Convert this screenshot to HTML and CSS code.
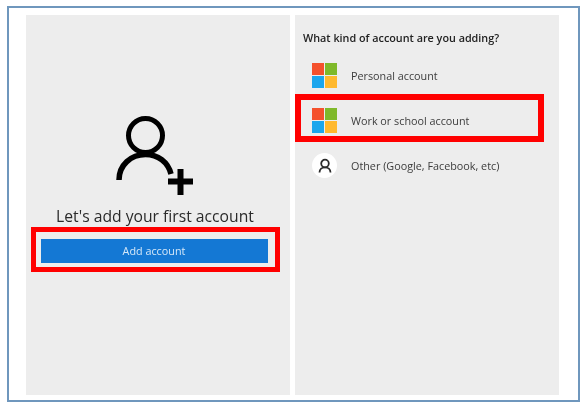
FILE: index.html
```html
<!DOCTYPE html>
<html>
<head>
    <meta charset="UTF-8">
    <title>Add account</title>
    <link rel="stylesheet" href="styles.css">
</head>
<body>
    <div class="frame">
        <!-- Left panel -->
        <div class="panel panel-start">
            <svg class="add-user" viewBox="110 112 90 86" width="90" height="86" fill="none" stroke="#000">
                <circle cx="145.5" cy="135.5" r="17" stroke-width="5"/>
                <path d="M119 180C119 165 131 154.500 145.500 154.500C158 154.500 168 162 171 174" stroke-width="5.500"/>
                <path d="M168 181.500H193M180.500 169V195" stroke-width="6"/>
            </svg>
            <h2>Let's add your first account</h2>
            <div class="highlight-box">
                <button type="button">Add account</button>
            </div>
        </div>

        <!-- Right panel -->
        <div class="panel panel-kinds">
            <h3>What kind of account are you adding?</h3>
            <div class="kind-row">
                <span class="ms-logo"><i class="red"></i><i class="green"></i><i class="blue"></i><i class="yellow"></i></span>
                <span>Personal account</span>
            </div>
            <div class="kind-row">
                <span class="ms-logo"><i class="red"></i><i class="green"></i><i class="blue"></i><i class="yellow"></i></span>
                <span>Work or school account</span>
                <div class="row-highlight"></div>
            </div>
            <div class="kind-row">
                <span class="avatar">
                    <svg viewBox="0 0 24 24" width="24" height="24" fill="none" stroke="#2b2b2b" stroke-width="1.800">
                        <circle cx="12" cy="9.500" r="3.800"/>
                        <path d="M6.500 18.500C6.500 15.500 9 13.300 12 13.300C15 13.300 17.500 15.500 17.500 18.500"/>
                    </svg>
                </span>
                <span>Other (Google, Facebook, etc)</span>
            </div>
        </div>
    </div>
</body>
</html>
```

FILE: styles.css
```css
body {
    margin: 0;
    background-color: #ffffff;
    font-family: 'Open Sans', 'Noto Sans', sans-serif;
}

/* Blue outline round the whole picture */
.frame {
    box-sizing: border-box;
    width: 573px;
    height: 396px;
    margin: 6px 0 0 7px;
    padding: 7px 0 0 17px;
    border: 2px solid #6f97bd;
    display: flex;
    gap: 5px;
    filter: blur(0.35px);
}

.panel {
    box-sizing: border-box;
    width: 264px;
    height: 380px;
    background-color: #ededed;
}

.panel-start {
    display: flex;
    flex-direction: column;
    align-items: center;
    padding-top: 97px;
}

.add-user {
    margin-right: 7px;
}

h2 {
    margin: 7px 6px 0 0;
    font-size: 15.7px;
    line-height: 22px;
    font-weight: 400;
    color: #2a2a2a;
}

.highlight-box {
    box-sizing: border-box;
    width: 249px;
    height: 45px;
    margin-right: 5px;
    padding: 6.5px 6px 2.5px 4.5px;
    border: 5.5px solid #ff0000;
}

button {
    display: block;
    width: 227px;
    height: 24px;
    padding: 0;
    border: none;
    background-color: #1478d4;
    color: #d6e8f8;
    font-family: inherit;
    font-size: 10.8px;
}

.panel-kinds {
    padding-top: 15px;
}

h3 {
    margin: 0 0 0 8px;
    font-size: 10.8px;
    line-height: 16px;
    font-weight: 600;
    color: #222222;
}

.kind-row {
    position: relative;
    display: flex;
    align-items: center;
    gap: 14px;
    height: 45px;
    padding-left: 17px;
    font-size: 10.8px;
    color: #3c3c3c;
}

.kind-row:first-of-type {
    margin-top: 7px;
}

/* Red marker drawn over the selected row */
.row-highlight {
    position: absolute;
    left: 0;
    top: -4.5px;
    box-sizing: border-box;
    width: 249px;
    height: 48.5px;
    border: 6px solid #ff0000;
}

.ms-logo {
    width: 25px;
    height: 25px;
    display: grid;
    grid-template-columns: 1fr 1fr;
    gap: 1px;
}

.ms-logo .red { background-color: #f4512c; }
.ms-logo .green { background-color: #7fb92a; }
.ms-logo .blue { background-color: #1ba6ed; }
.ms-logo .yellow { background-color: #ffb92e; }

.avatar {
    width: 25px;
    height: 25px;
    border-radius: 50%;
    background-color: #ffffff;
    display: flex;
    align-items: center;
    justify-content: center;
}
```
